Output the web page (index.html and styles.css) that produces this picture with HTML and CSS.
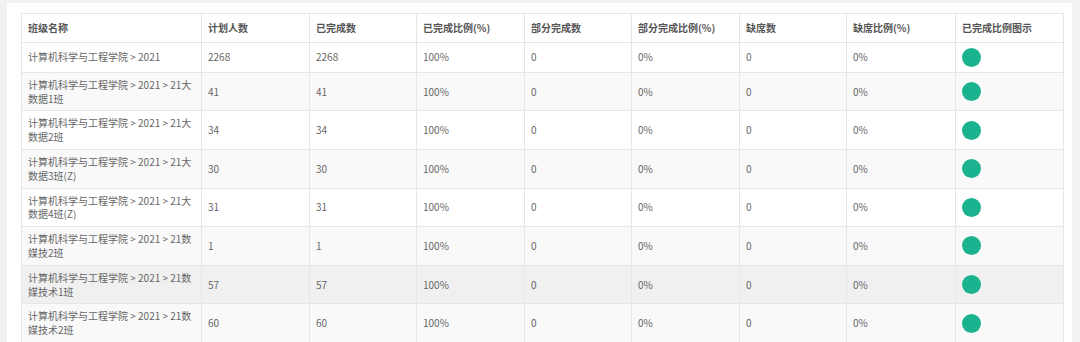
FILE: index.html
```html
<!DOCTYPE html>
<html lang="zh-CN">
<head>
<meta charset="utf-8">
<title>班级统计</title>
<link rel="stylesheet" href="styles.css">
</head>
<body>
<div class="panel">
  <table class="stat">
    <colgroup>
      <col class="c-name"><col class="c-a"><col class="c-b"><col class="c-a"><col class="c-b"><col class="c-a"><col class="c-b"><col class="c-c"><col class="c-a">
    </colgroup>
    <thead>
      <tr><th>班级名称</th><th>计划人数</th><th>已完成数</th><th>已完成比例(%)</th><th>部分完成数</th><th>部分完成比例(%)</th><th>缺席数</th><th>缺席比例(%)</th><th>已完成比例图示</th></tr>
    </thead>
    <tbody>
      <tr class="r-white"><td>计算机科学与工程学院 &gt; 2021</td><td>2268</td><td>2268</td><td>100%</td><td>0</td><td>0%</td><td>0</td><td>0%</td><td><span class="dot"></span></td></tr>
      <tr class="r-gray"><td>计算机科学与工程学院 &gt; 2021 &gt; 21大数据1班</td><td>41</td><td>41</td><td>100%</td><td>0</td><td>0%</td><td>0</td><td>0%</td><td><span class="dot"></span></td></tr>
      <tr class="r-white"><td>计算机科学与工程学院 &gt; 2021 &gt; 21大数据2班</td><td>34</td><td>34</td><td>100%</td><td>0</td><td>0%</td><td>0</td><td>0%</td><td><span class="dot"></span></td></tr>
      <tr class="r-gray"><td>计算机科学与工程学院 &gt; 2021 &gt; 21大数据3班(Z)</td><td>30</td><td>30</td><td>100%</td><td>0</td><td>0%</td><td>0</td><td>0%</td><td><span class="dot"></span></td></tr>
      <tr class="r-white"><td>计算机科学与工程学院 &gt; 2021 &gt; 21大数据4班(Z)</td><td>31</td><td>31</td><td>100%</td><td>0</td><td>0%</td><td>0</td><td>0%</td><td><span class="dot"></span></td></tr>
      <tr class="r-gray"><td>计算机科学与工程学院 &gt; 2021 &gt; 21数媒技2班</td><td>1</td><td>1</td><td>100%</td><td>0</td><td>0%</td><td>0</td><td>0%</td><td><span class="dot"></span></td></tr>
      <tr class="r-hover"><td>计算机科学与工程学院 &gt; 2021 &gt; 21数媒技术1班</td><td>57</td><td>57</td><td>100%</td><td>0</td><td>0%</td><td>0</td><td>0%</td><td><span class="dot"></span></td></tr>
      <tr class="r-gray"><td>计算机科学与工程学院 &gt; 2021 &gt; 21数媒技术2班</td><td>60</td><td>60</td><td>100%</td><td>0</td><td>0%</td><td>0</td><td>0%</td><td><span class="dot"></span></td></tr>
    </tbody>
  </table>
</div>
</body>
</html>
```
FILE: styles.css
```css
html, body {
  margin: 0;
  padding: 0;
  background: #f2f2f2;
  font-family: "Noto Sans CJK SC", "Noto Sans", sans-serif;
  overflow: hidden;
}
.panel {
  margin: 3px 0 0 7px;
  width: 1065px;
  box-sizing: border-box;
  padding: 10px 9px 0 14px;
  background: #fff;
}
.stat {
  width: 1042px;
  border-collapse: collapse;
  table-layout: fixed;
  font-size: 10px;
  color: #666;
}
.c-name { width: 180px; }
.c-a { width: 108px; }
.c-b { width: 107px; }
.c-c { width: 109px; }
.stat th, .stat td {
  border: 1px solid #e6e6e6;
  text-align: left;
  vertical-align: middle;
  padding: 5px 6px;
  line-height: 13.8px;
}
.stat th {
  padding: 7px 6px;
  font-weight: bold;
  color: #555;
  background: #fff;
}
.r-white { background: #fff; }
.r-gray { background: #f9f9f9; }
.r-hover { background: #f0f0f0; }
.dot {
  display: block;
  width: 19px;
  height: 19px;
  border-radius: 50%;
  background: #1bb38f;
}
```
